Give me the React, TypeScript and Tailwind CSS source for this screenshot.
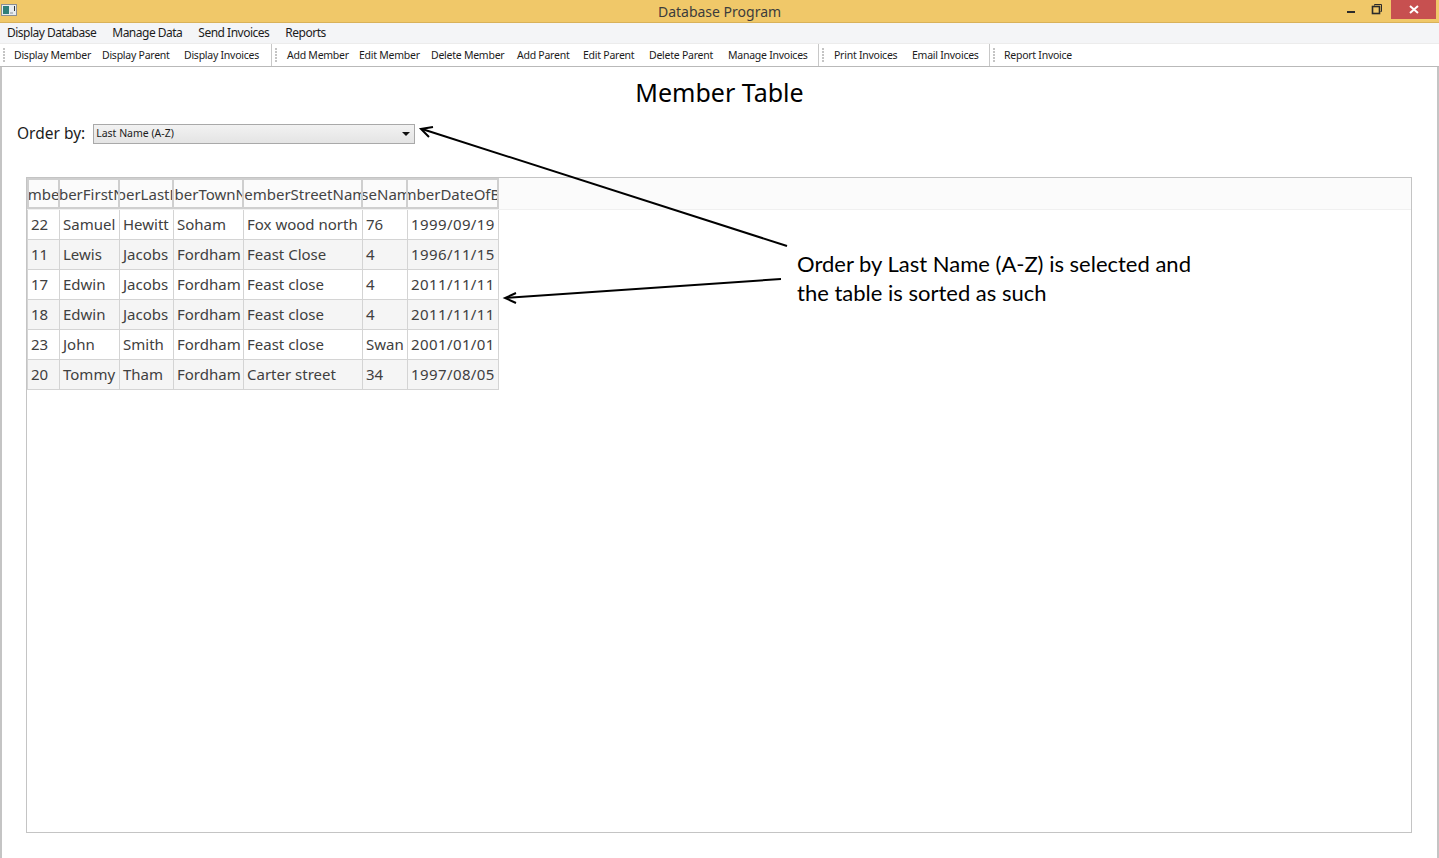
import React from 'react';

const menus = ['Display Database', 'Manage Data', 'Send Invoices', 'Reports'];

const toolbarGroups = [
  {
    offset: 'ml-[9px]',
    items: [
      ['Display Member', 'w-[88px]'],
      ['Display Parent', 'w-[82px]'],
      ['Display Invoices', 'w-[87px]'],
    ],
  },
  {
    offset: 'ml-[10px]',
    items: [
      ['Add Member', 'w-[72px]'],
      ['Edit Member', 'w-[72px]'],
      ['Delete Member', 'w-[86px]'],
      ['Add Parent', 'w-[66px]'],
      ['Edit Parent', 'w-[66px]'],
      ['Delete Parent', 'w-[79px]'],
      ['Manage Invoices', 'w-[90px]'],
    ],
  },
  {
    offset: 'ml-[10px]',
    items: [
      ['Print Invoices', 'w-[78px]'],
      ['Email Invoices', 'w-[77px]'],
    ],
  },
  { offset: 'ml-[9px]', items: [['Report Invoice', 'w-[80px]']] },
];

const columns: [string, string][] = [
  ['memberID', 'w-[33px]'],
  ['memberFirstName', 'w-[60px]'],
  ['memberLastName', 'w-[54px]'],
  ['memberTownName', 'w-[70px]'],
  ['memberStreetName', 'w-[119px]'],
  ['houseName', 'w-[45px] pr-[16px]'],
  ['memberDateOfBirth', 'w-[91px]'],
];

const rows = [
  ['22', 'Samuel', 'Hewitt', 'Soham', 'Fox wood north', '76', '1999/09/19'],
  ['11', 'Lewis', 'Jacobs', 'Fordham', 'Feast Close', '4', '1996/11/15'],
  ['17', 'Edwin', 'Jacobs', 'Fordham', 'Feast close', '4', '2011/11/11'],
  ['18', 'Edwin', 'Jacobs', 'Fordham', 'Feast close', '4', '2011/11/11'],
  ['23', 'John', 'Smith', 'Fordham', 'Feast close', 'Swan', '2001/01/01'],
  ['20', 'Tommy', 'Tham', 'Fordham', 'Carter street', '34', '1997/08/05'],
];

const cellWidths = ['w-[33px]', 'w-[60px]', 'w-[54px]', 'w-[70px]', 'w-[119px]', 'w-[45px]', 'w-[91px]'];

const Grip = () => (
  <div className="flex w-[2px] flex-col gap-[1px]">
    {[0, 1, 2, 3, 4].map((i) => (
      <div key={i} className="h-[2px] w-[2px] bg-[#c4c4c4]" />
    ))}
  </div>
);

export default function App() {
  return (
    <div className="relative h-[858px] w-[1439px] overflow-hidden bg-white font-['Noto_Sans',sans-serif] text-black">
      {/* Title bar */}
      <div className="relative flex h-[23px] items-center justify-center border-b border-[#d9b25a] bg-[#f0c869]">
        <svg className="absolute left-[1px] top-[4px]" width="16" height="12" viewBox="0 0 16 12">
          <rect x="0.5" y="0.5" width="15" height="11" fill="#e8ecef" stroke="#8a8f94" />
          <rect x="2" y="2" width="6" height="8" fill="#2f7f78" />
          <rect x="9" y="8" width="3" height="2" fill="#b8c0c6" />
          <rect x="13" y="2" width="1" height="5" fill="#333" />
        </svg>
        <span className="text-[14px] text-[#3c3c3c]">Database Program</span>
        <div className="absolute right-[3px] top-0 flex items-start">
          <svg className="mr-[14px] mt-[4px]" width="12" height="12" viewBox="0 0 12 12">
            <rect x="2" y="7" width="8" height="2" fill="#2b2b2b" />
          </svg>
          <svg className="mr-[8px] mt-[3px]" width="12" height="12" viewBox="0 0 12 12" fill="none" stroke="#2b2b2b">
            <path d="M3.5 2.5V1.5H10.5V8.5H9.5" />
            <rect x="1.5" y="3.5" width="7" height="7" strokeWidth="1.6" />
          </svg>
          <div className="flex h-[19px] w-[45px] items-center justify-center bg-[#c75050]">
            <svg width="10" height="9" viewBox="0 0 10 9" stroke="#fff" strokeWidth="2">
              <path d="M1 1L9 8M9 1L1 8" />
            </svg>
          </div>
        </div>
      </div>

      {/* Menu bar */}
      <div className="flex h-[21px] items-center gap-[16px] border-b border-[#ececec] bg-[#f4f5f7] pl-[7px] text-[12px] tracking-[-0.5px] text-[#1c1c1c]">
        {menus.map((m) => (
          <span key={m}>{m}</span>
        ))}
      </div>

      {/* Toolbar */}
      <div className="flex h-[23px] items-center border-b border-[#b9b9b9] bg-white text-[10.5px] tracking-[-0.25px] text-[#1c1c1c]">
        {toolbarGroups.map((g, i) => (
          <div key={i} className={`flex h-full items-center pl-[3px] ${i < 3 ? 'border-r border-[#c8c8c8]' : ''}`}>
            <Grip />
            <div className={`${g.offset} flex items-center pt-[2px]`}>
              {g.items.map(([label, w]) => (
                <span key={label} className={`${w} whitespace-nowrap`}>
                  {label}
                </span>
              ))}
            </div>
          </div>
        ))}
      </div>

      {/* Content */}
      <div className="flex h-[791px] flex-col border-x-2 border-[#c4c4c4] bg-white">
        <h1 className="mt-[7px] h-[36px] text-center text-[25px] leading-[36px] text-black">Member Table</h1>
        <div className="mt-[14px] flex h-[20px] items-center pl-[15px]">
          <span className="text-[15.5px] text-[#1c1c1c]">Order by:</span>
          <div className="ml-[8px] flex h-[20px] w-[322px] items-center justify-between border border-[#a9a9a9] bg-gradient-to-b from-[#f2f2f2] to-[#e4e4e4] pl-[2px] pr-[4px] text-[10.5px] text-[#1c1c1c]">
            <span>Last Name (A-Z)</span>
            <svg width="8" height="4" viewBox="0 0 8 4"><path d="M0 0H8L4 4Z" fill="#111" /></svg>
          </div>
        </div>

        {/* Table frame */}
        <div className="ml-[24px] mr-[25px] mt-[33px] h-[656px] border border-[#c4c4c4] bg-white">
          <div className="flex h-[32px] border-b border-[#f0f0f0] bg-[#fbfbfb]">
            {columns.map(([name, w]) => (
              <div key={name} className={`${w} flex shrink-0 justify-center overflow-hidden border-2 border-l-0 border-[#cfcfcf] text-[15px] leading-[29px] text-[#444444] first:border-l-2`}>
                <span className="whitespace-nowrap">{name}</span>
              </div>
            ))}
          </div>
          {rows.map((row, r) => (
            <div key={row[0]} className={`flex h-[30px] w-fit ${r % 2 === 1 ? 'bg-[#f5f5f5]' : 'bg-white'}`}>
              {row.map((cell, c) => (
                <div key={c} className={`${cellWidths[c]} shrink-0 overflow-hidden whitespace-nowrap border-b border-r border-[#d4d4d4] pl-[3px] text-[15px] leading-[29px] text-[#404040] first:border-l ${c === 6 ? 'tracking-[0.4px]' : ''}`}>
                  {cell}
                </div>
              ))}
            </div>
          ))}
        </div>
      </div>

      {/* Annotation arrows */}
      <svg className="pointer-events-none absolute left-0 top-0" width="1439" height="858" fill="none" stroke="#000" strokeWidth="2">
        <path d="M787 246L422 129" />
        <path d="M433 127L421 129L429 137" />
        <path d="M781 279L506 298" />
        <path d="M516 293L505 298L516 303" />
      </svg>

      {/* Annotation text */}
      <div className="absolute left-[797px] top-[249px] font-['Lato',sans-serif] text-[22px] leading-[29px] text-black">
        <div>Order by Last Name (A-Z) is selected and</div>
        <div>the table is sorted as such</div>
      </div>
    </div>
  );
}
